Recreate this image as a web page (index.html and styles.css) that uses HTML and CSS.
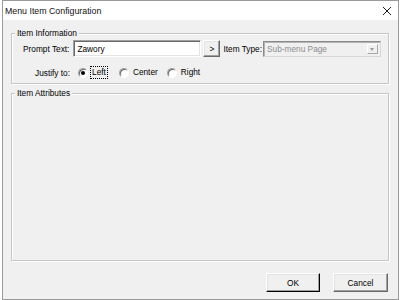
FILE: index.html
```html
<!DOCTYPE html>
<html lang="en">
<head>
    <meta charset="UTF-8">
    <title>Menu Item Configuration</title>
    <link rel="stylesheet" href="styles.css">
</head>
<body>
    <div class="window">
        <div class="titlebar">
            <span class="title">Menu Item Configuration</span>
            <svg class="close" width="10" height="10" viewBox="0 0 10 10">
                <path d="M1 1 L9 9 M9 1 L1 9" stroke="#222" stroke-width="1" fill="none"/>
            </svg>
        </div>

        <div class="client">
            <!-- 菜单项信息 -->
            <fieldset class="group group-info">
                <legend>Item Information</legend>
                <div class="row prompt-row">
                    <span class="lbl">Prompt Text:</span>
                    <div class="textbox">Zawory</div>
                    <div class="btn btn-more">&gt;</div>
                    <span class="lbl type-lbl">Item Type:</span>
                    <div class="combo">
                        <span class="combo-text">Sub-menu Page</span>
                        <span class="combo-arrow"></span>
                    </div>
                </div>
                <div class="row justify-row">
                    <span class="lbl">Justify to:</span>
                    <span class="radio checked"></span>
                    <span class="opt focus">Left</span>
                    <span class="radio radio-center"></span>
                    <span class="opt">Center</span>
                    <span class="radio radio-right"></span>
                    <span class="opt">Right</span>
                </div>
            </fieldset>

            <!-- 属性 -->
            <fieldset class="group group-attr">
                <legend>Item Attributes</legend>
            </fieldset>

            <div class="buttons">
                <div class="btn btn-dlg btn-default">OK</div>
                <div class="btn btn-dlg">Cancel</div>
            </div>
        </div>
    </div>
</body>
</html>
```

FILE: styles.css
```css
:root {
    --face: #f0f0f0;
    --etch: #c6c6c6;
    --shadow: #a0a0a0;
    --dark: #696969;
}

body {
    margin: 0;
    width: 400px;
    height: 300px;
    background: #fff;
    font-family: "Liberation Sans", Arial, sans-serif;
    font-size: 8.3px;
    color: #000;
    overflow: hidden;
}

.window {
    margin-left: 2px;
    width: 397px;
    height: 300px;
    box-sizing: border-box;
    border: 1px solid #9a9a9a;
    background: var(--face);
    display: flex;
    flex-direction: column;
}

/* 标题栏 */
.titlebar {
    height: 19px;
    background: #fff;
    display: flex;
    align-items: center;
    justify-content: space-between;
    padding: 0 6px 0 2px;
}

.title {
    font-size: 8.8px;
    color: #111;
}

.close {
    display: block;
    margin-top: 1px;
}

.client {
    flex: 1;
    display: flex;
    flex-direction: column;
    padding: 8px 9px 7px 8px;
}

/* 分组框 */
.group {
    margin: 0;
    padding: 1px 0 4px 3px;
    border: 1px solid var(--etch);
    box-shadow: inset 1px 1px 0 #fff, 1px 1px 0 #fff;
    min-width: 0;
}

.group legend {
    padding: 0 2px;
    line-height: 11px;
    background: var(--face);
}

.group-attr {
    flex: 1;
    margin-top: 4px;
}

.row {
    display: flex;
    align-items: center;
    padding-left: 8px;
}

.prompt-row {
    height: 17px;
}

.justify-row {
    height: 13px;
    margin-top: 9px;
    padding-left: 20px;
}

.lbl {
    white-space: nowrap;
}

.textbox {
    width: 128px;
    height: 17px;
    box-sizing: border-box;
    margin-left: 4px;
    padding: 3px 0 0 3px;
    background: #fff;
    border: 1px solid;
    border-color: var(--shadow) #fff #fff var(--shadow);
    box-shadow: inset 1px 1px 0 var(--dark), inset -1px -1px 0 #e3e3e3;
}

/* 按钮 */
.btn {
    box-sizing: border-box;
    display: flex;
    align-items: center;
    justify-content: center;
    background: var(--face);
    border: 1px solid;
    border-color: #fff var(--dark) var(--dark) #fff;
    box-shadow: inset -1px -1px 0 var(--shadow), inset 1px 1px 0 #e3e3e3;
}

.btn-more {
    width: 17px;
    height: 17px;
    margin-left: 2px;
}

.type-lbl {
    margin-left: 3px;
}

.combo {
    width: 118px;
    height: 16px;
    box-sizing: border-box;
    margin-left: 1px;
    display: flex;
    align-items: center;
    justify-content: space-between;
    padding: 0 2px 0 3px;
    background: var(--face);
    border: 1px solid;
    border-color: #8a8a8a #d8d8d8 #d8d8d8 #8a8a8a;
    box-shadow: inset 1px 1px 0 #b4b4b4;
}

.combo-text {
    color: #8d8d8d;
}

.combo-arrow {
    width: 11px;
    height: 10px;
    box-sizing: border-box;
    position: relative;
    border: 1px solid;
    border-color: #fff #a8a8a8 #a8a8a8 #fff;
}

.combo-arrow::after {
    content: "";
    position: absolute;
    left: 2px;
    top: 3px;
    border-left: 2.5px solid transparent;
    border-right: 2.5px solid transparent;
    border-top: 3px solid #9a9a9a;
}

/* 单选按钮 */
.radio {
    width: 10px;
    height: 10px;
    box-sizing: border-box;
    border-radius: 50%;
    background: #fff;
    border: 1px solid;
    border-color: var(--shadow) #fff #fff var(--shadow);
    box-shadow: inset 1px 1px 0 var(--dark);
    position: relative;
    margin-left: 8px;
    flex: none;
}

.radio.checked::after {
    content: "";
    position: absolute;
    left: 2px;
    top: 2px;
    width: 4px;
    height: 4px;
    border-radius: 50%;
    background: #000;
}

.radio-center {
    margin-left: 12px;
}

.opt {
    margin-left: 3px;
    padding: 0 1px;
    line-height: 11px;
}

.focus {
    outline: 1px dotted #000;
}

.buttons {
    display: flex;
    justify-content: flex-end;
    gap: 13px;
    margin-top: 12px;
    padding-right: 1px;
}

.btn-dlg {
    width: 55px;
    height: 19px;
}

.btn-default {
    width: 54px;
    border-color: #fff #000 #000 #fff;
}
```
